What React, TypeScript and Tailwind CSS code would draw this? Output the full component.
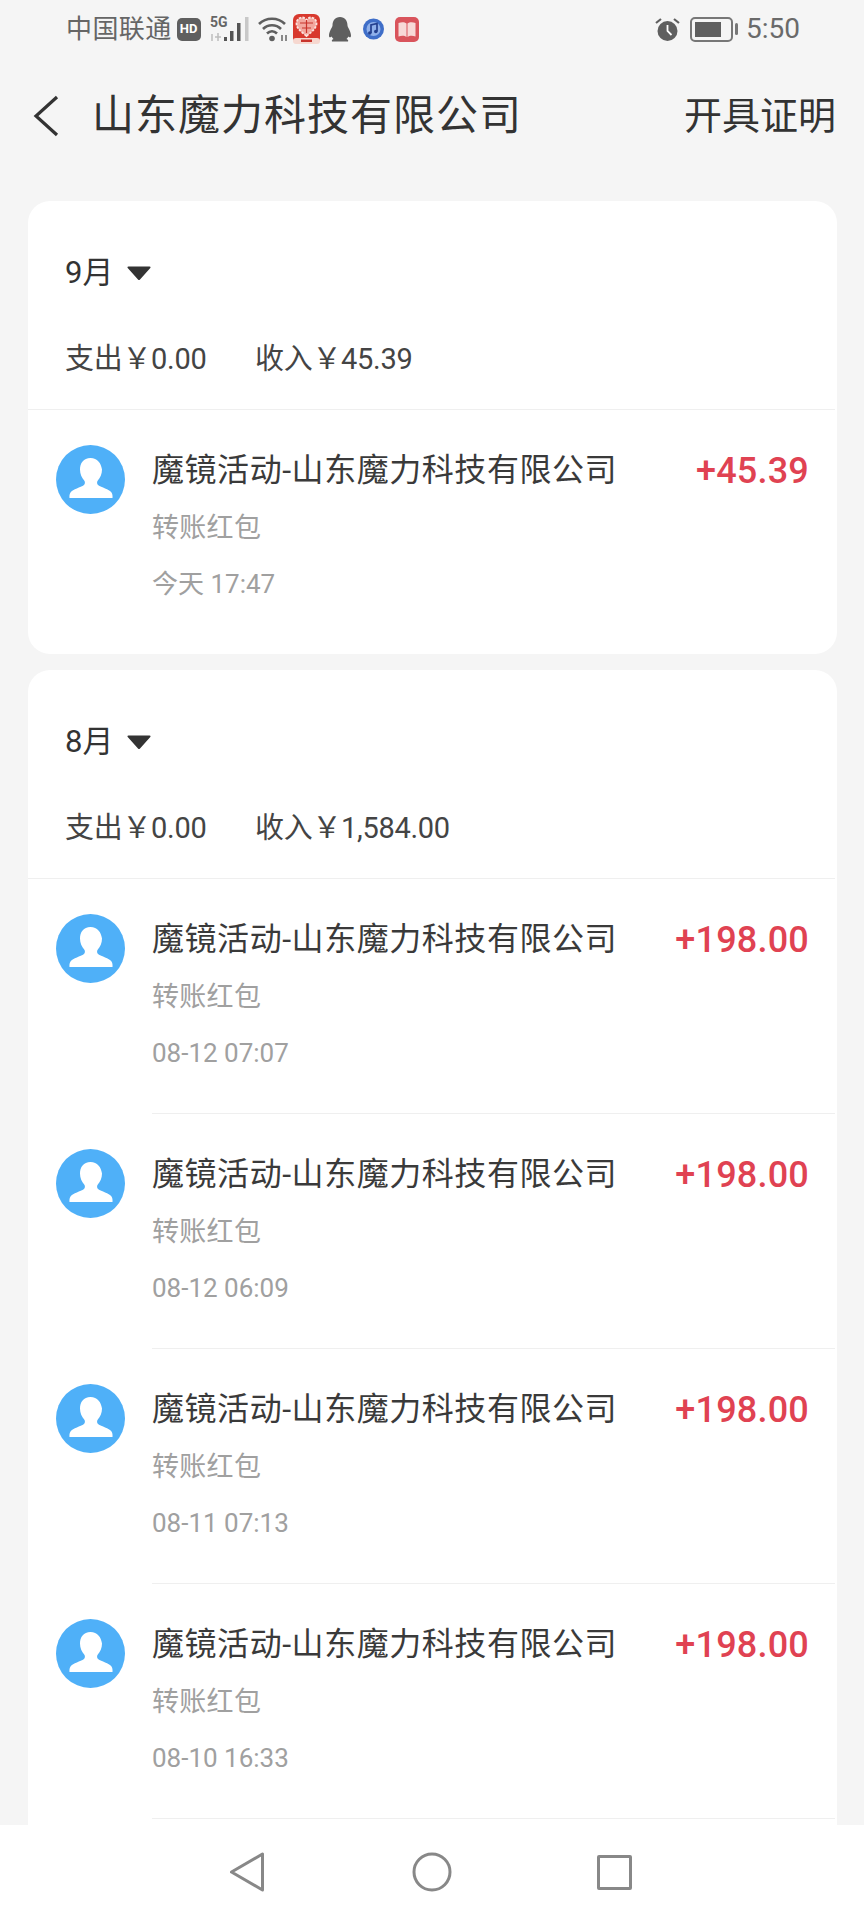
import React from 'react';

const transactions = [
  { id: 1, time: '08-12 07:07' },
  { id: 2, time: '08-12 06:09' },
  { id: 3, time: '08-11 07:13' },
  { id: 4, time: '08-10 16:33' },
];

const Avatar = () => (
  <svg viewBox="0 0 69 69" className="w-[69px] h-[69px] shrink-0">
    <circle cx="34.5" cy="34.5" r="34.5" fill="#4fb0f8" />
    <path
      d="M34.5 13c-7 0-10.500 5.200-10.500 11.500 0 4.500 1.800 8.500 4.200 11 1 1.200 1 3.500-.2 4.500-3.500 2.500-11 4-13.500 7.500-1 1.500-1.200 3.500-1 5.500h43c.2-2 0-4-1-5.500-2.500-3.500-10-5-13.500-7.500-1.200-1-1.200-3.300-.2-4.500 2.400-2.500 4.200-6.500 4.200-11C45 18.200 41.500 13 34.500 13z"
      fill="#fff"
    />
  </svg>
);

const Row = ({ amount, time, divider }: { amount: string; time: string; divider: boolean }) => (
  <div className="flex pl-7">
    <div className="pt-[35px] mr-[27px]">
      <Avatar />
    </div>
    <div className={`flex-1 flex justify-between h-[235px] pt-[38px] pr-[26px] mr-[2px] ${divider ? 'border-b border-[#efefef]' : ''}`}>
      <div>
        <div className="text-[32px] leading-[44px] tracking-[0.55px] text-[#3a3a3a]">魔镜活动-山东魔力科技有限公司</div>
        <div className="text-[27px] leading-[40px] tracking-[0.3px] text-[#a0a0a0] mt-[16px]">转账红包</div>
        <div className="text-[26px] leading-[40px] text-[#a0a0a0] mt-[16px]">{time}</div>
      </div>
      <div className="text-[36px] leading-[46px] tracking-[0.2px] font-medium text-[#e04252]">{amount}</div>
    </div>
  </div>
);

const MonthHeader = ({ month, income }: { month: string; income: string }) => (
  <div className="border-b border-[#efefef] mr-[2px]">
    <div className="flex items-center pl-[37px] pt-[54px] h-[90px] text-[31px] leading-[36px] text-[#333]">
      <span>{month}</span>
      <svg viewBox="0 0 24 16" className="w-[24px] h-[16px] ml-[14px]">
        <path d="M1.500 1.500h21a1 1 0 0 1 .8 1.500L13 14.500a1.300 1.300 0 0 1-2 0L.7 3a1 1 0 0 1 .8-1.500z" fill="#333" />
      </svg>
    </div>
    <div className="flex pl-[37px] mt-[48px] mb-[30px] h-[40px] text-[29px] leading-[40px] tracking-[-0.3px] text-[#444]">
      <span className="w-[190px]">支出￥0.00</span>
      <span>收入￥{income}</span>
    </div>
  </div>
);

const StatusBar = () => (
  <div className="flex items-center h-[58px] pl-[66px] pr-[64px] text-[#666]">
    <span className="text-[26px] leading-[30px] tracking-[0.4px]">中国联通</span>
    {/* HD */}
    <span className="ml-[5px] w-[24px] h-[23px] shrink-0 rounded-[5px] bg-[#5f5f5f] text-white text-[13px] leading-[16px] font-bold flex items-center justify-center">HD</span>
    {/* 5G signal */}
    <svg viewBox="0 0 40 26" className="w-[40px] h-[26px] ml-[9px]">
      <text x="0" y="11" fontSize="14" fontWeight="700" fill="#666" fontFamily="Roboto">5G</text>
      <path d="M2 18v7M8 17v8M5 21h6" stroke="#bdbdbd" strokeWidth="1.500" fill="none" />
      <rect x="14" y="21" width="3" height="4" fill="#555" />
      <rect x="20" y="15" width="3.500" height="10" fill="#555" />
      <rect x="27" y="7" width="3.500" height="18" fill="#555" />
      <rect x="35" y="1" width="3.500" height="24" fill="#c8c8c8" />
    </svg>
    {/* wifi */}
    <svg viewBox="0 0 30 26" className="w-[30px] h-[26px] ml-[8px]">
      <path d="M1 8c7-7 19-7 26 0M5 13c5-5 13-5 18 0M9 17.500c3-3 7-3 10 0" stroke="#5f5f5f" strokeWidth="2.600" fill="none" />
      <circle cx="14" cy="22.500" r="2.800" fill="#5f5f5f" />
      <path d="M24 19v6M28 19v6" stroke="#666" strokeWidth="1.500" />
    </svg>
    {/* red heart app */}
    <svg viewBox="0 0 27 30" className="w-[27px] h-[30px] ml-[5px]">
      <rect width="27" height="30" rx="6" fill="#d8392e" />
      <path d="M13.500 22C7 17 3.500 13.500 3.500 9.500 3.500 6 6 3.500 9 3.500c2 0 3.500 1 4.500 2.500 1-1.500 2.500-2.500 4.500-2.500 3 0 5.500 2.500 5.500 6 0 4-3.500 7.500-10 12.500z" fill="#f3a89f" stroke="#fbe3df" strokeWidth="1.800" strokeDasharray="2.500 1.200" />
      <path d="M7 9l13 0M9 14l9 0M13.500 6v13" stroke="#c8342c" strokeWidth="1.200" />
      <rect x="0" y="24" width="27" height="6" rx="3" fill="#f6d8d0" />
      <rect x="8" y="25.500" width="11" height="2.500" fill="#c8342c" />
    </svg>
    {/* qq */}
    <svg viewBox="0 0 24 26" className="w-[24px] h-[26px] ml-[8px]">
      <path d="M12 1C7 1 4.500 5 4.500 9.500c0 1.500-3.500 6-3.500 10 0 2 1 2.500 2.500 1 .5 1 1.200 1.800 2 2.500-1.500.5-2 1.500-1.500 2.500h16c.5-1 0-2-1.500-2.500.8-.7 1.500-1.500 2-2.500 1.500 1.500 2.500 1 2.500-1 0-4-3.500-8.500-3.500-10C19.500 5 17 1 12 1z" fill="#5f5f5f" />
    </svg>
    {/* music */}
    <svg viewBox="0 0 21 22" className="w-[21px] h-[22px] ml-[11px]">
      <circle cx="10.500" cy="11" r="10.500" fill="#3f6ec8" />
      <circle cx="10.500" cy="11" r="7" fill="#8fb0ea" />
      <path d="M8 15V7l6-1.500V13.500" stroke="#24408f" strokeWidth="1.700" fill="none" />
      <circle cx="6.800" cy="15" r="1.800" fill="#24408f" />
      <circle cx="12.800" cy="13.500" r="1.800" fill="#24408f" />
    </svg>
    {/* book */}
    <svg viewBox="0 0 24 25" className="w-[24px] h-[25px] ml-[11px]">
      <rect width="24" height="25" rx="5" fill="#d9545c" />
      <path d="M3.500 6c3-1 6-1 8 .5V20c-2-1.500-5-1.500-8-.5zM20.500 6c-3-1-6-1-8 .5V20c2-1.500 5-1.500 8-.5z" fill="#f7d9d8" />
    </svg>
    <div className="flex-1" />
    {/* alarm */}
    <svg viewBox="0 0 25 25" className="w-[25px] h-[25px]">
      <circle cx="12.500" cy="14" r="10" fill="#5f5f5f" />
      <path d="M12.500 8v6l4 4" stroke="#fff" strokeWidth="1.800" fill="none" />
      <path d="M1 6l5-4M24 6l-5-4" stroke="#5f5f5f" strokeWidth="2.200" fill="none" />
    </svg>
    {/* battery */}
    <div className="flex items-center ml-[10px]">
      <div className="w-[43px] h-[25px] rounded-[5px] border-2 border-[#777] p-[3px]">
        <div className="w-[26px] h-full bg-[#5f5f5f]" />
      </div>
      <div className="w-[3px] h-[12px] ml-[2px] rounded-sm bg-[#777]" />
    </div>
    <span className="ml-[8px] text-[28px] leading-[30px] text-[#6a6a6a]">5:50</span>
  </div>
);

const NavBar = () => (
  <div className="h-[95px] bg-white flex items-start justify-center shrink-0 pt-[27px] pr-[3px]">
    <svg viewBox="0 0 36 40" className="w-[36px] h-[40px]">
      <path d="M33.500 2v36L2.500 20z" stroke="#888" strokeWidth="3" strokeLinejoin="round" fill="none" />
    </svg>
    <svg viewBox="0 0 40 40" className="w-[40px] h-[40px] ml-[147px]">
      <circle cx="20" cy="20" r="18" stroke="#888" strokeWidth="3" fill="none" />
    </svg>
    <div className="w-[35px] h-[35px] mt-[3px] ml-[145px] border-[3px] border-[#888] rounded-[2px]" />
  </div>
);

export default function App() {
  return (
    <div
      className="w-[864px] h-[1920px] overflow-hidden bg-[#f5f5f5] flex flex-col"
      style={{ fontFamily: 'Roboto, "Noto Sans CJK SC", sans-serif' }}
    >
      <StatusBar />

      <div className="flex items-center justify-between h-[116px] pl-[33px] pr-[28px]">
        <div className="flex items-center">
          <svg viewBox="0 0 26 42" className="w-[26px] h-[42px]">
            <path d="M24 2L3 21l21 19" stroke="#333" strokeWidth="3.200" fill="none" />
          </svg>
          <span className="ml-[33px] text-[42px] leading-[56px] tracking-[1px] text-[#333]">山东魔力科技有限公司</span>
        </div>
        <span className="text-[38px] leading-[50px] text-[#333]">开具证明</span>
      </div>

      <div className="flex-1 overflow-hidden px-[27px] pt-[27px] ml-[1px] flex flex-col gap-[16px]">
        <div className="bg-white rounded-[22px] h-[453px] shrink-0">
          <MonthHeader month="9月" income="45.39" />
          <Row amount="+45.39" time="今天 17:47" divider={false} />
        </div>
        <div className="bg-white rounded-t-[22px] flex-1">
          <MonthHeader month="8月" income="1,584.00" />
          {transactions.map((t) => (
            <Row key={t.id} amount="+198.00" time={t.time} divider />
          ))}
        </div>
      </div>

      <NavBar />
    </div>
  );
}
